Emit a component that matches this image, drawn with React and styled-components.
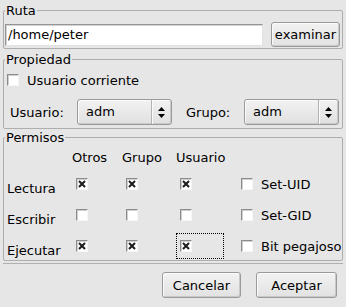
import styled, { createGlobalStyle } from "styled-components";

const GlobalStyle = createGlobalStyle`
  html, body {
    margin: 0;
    padding: 0;
    background: #e6e6e6;
  }
  body {
    font-family: "DejaVu Sans", Verdana, sans-serif;
    font-size: 13px;
    color: #000;
  }
`;

const Dialog = styled.div`
  width: 346px;
  height: 307px;
  box-sizing: border-box;
  padding: 3px 3px 0 3px;
  display: flex;
  flex-direction: column;
`;

const Group = styled.fieldset`
  margin: ${(p) => p.$mt || 0}px 0 0 0;
  padding: ${(p) => p.$pad};
  border: 1px solid #adadad;
  border-radius: 2px;
  min-width: 0;
`;

const Title = styled.legend`
  padding: 0 1px;
  margin-left: 0;
  line-height: 15px;
`;

const PathRow = styled.div`
  display: flex;
  align-items: center;
  gap: 8px;
  height: 25px;
`;

const TextInput = styled.input`
  flex: 1;
  min-width: 0;
  height: 22px;
  box-sizing: border-box;
  padding: 0 2px;
  font: inherit;
  color: #000;
  background: #fff;
  border: 1px solid;
  border-color: #959595 #e2e2e2 #e2e2e2 #959595;
  box-shadow: inset 1px 1px 0 #d4d4d4;
  outline: none;
`;

const PushButton = styled.button`
  width: ${(p) => p.$w}px;
  height: ${(p) => p.$h || 26}px;
  box-sizing: border-box;
  padding: 0;
  font: inherit;
  color: #000;
  border: 1px solid #9a9a9a;
  border-radius: 3px;
  background: linear-gradient(#f2f2f2, #e2e2e2);
  box-shadow: inset 1px 1px 0 #fbfbfb, inset -1px -1px 0 #c9c9c9;
`;

const CheckRow = styled.label`
  display: flex;
  align-items: center;
  gap: 8px;
  height: 16px;
  margin-left: 2px;
`;

const BoxEl = styled.span`
  width: 12px;
  height: 12px;
  box-sizing: border-box;
  flex: none;
  display: flex;
  align-items: center;
  justify-content: center;
  background: #fff;
  border: 1px solid;
  border-color: #8c8c8c #f6f6f6 #f6f6f6 #8c8c8c;
  box-shadow: inset 1px 1px 0 #cfcfcf;
`;

const CheckBox = ({ checked }) => (
  <BoxEl>
    {checked && (
      <svg width="8" height="8" viewBox="0 0 8 8">
        <path d="M1 1L7 7M7 1L1 7" stroke="#1a1a1a" strokeWidth="2" />
      </svg>
    )}
  </BoxEl>
);

const OwnerRow = styled.div`
  display: flex;
  align-items: center;
  height: 26px;
  margin-top: 11px;
  padding-left: 5px;
`;

const FieldLabel = styled.span`
  width: ${(p) => p.$w}px;
  margin-left: ${(p) => p.$ml || 0}px;
`;

const Combo = styled.div`
  width: 95px;
  height: 26px;
  box-sizing: border-box;
  display: flex;
  border: 1px solid #9a9a9a;
  border-radius: 3px;
  background: linear-gradient(#f2f2f2, #e0e0e0);
  box-shadow: inset 1px 1px 0 #fbfbfb, inset -1px -1px 0 #c9c9c9;
`;

const ComboText = styled.span`
  flex: 1;
  padding-left: 8px;
  line-height: 24px;
`;

const ComboArrow = styled.span`
  width: 19px;
  display: flex;
  align-items: center;
  justify-content: center;
  border-left: 1px solid #b3b3b3;
  box-shadow: inset 1px 0 0 #fafafa;
`;

const Select = ({ value }) => (
  <Combo>
    <ComboText>{value}</ComboText>
    <ComboArrow>
      <svg width="7" height="11" viewBox="0 0 7 11">
        <path d="M3.5 0L7 4H0Z M0 7H7L3.5 11Z" fill="#000" />
      </svg>
    </ComboArrow>
  </Combo>
);

const PermGrid = styled.div`
  display: grid;
  grid-template-columns: 67px 50px 54px 65px 1fr;
  grid-template-rows: 16px 26px 26px 26px;
  row-gap: 5px;
  align-items: center;
`;

const Header = styled.span`
  line-height: 16px;
`;

const RowLabel = styled.span`
  align-self: end;
  padding: 0 0 1px 2px;
  line-height: 15px;
`;

const CheckCell = styled.div`
  width: 48px;
  height: 26px;
  box-sizing: border-box;
  display: flex;
  align-items: center;
  padding-left: 3px;
  border: 1px dotted ${(p) => (p.$focus ? "#000" : "transparent")};
`;

const FlagCell = styled.div`
  display: flex;
  align-items: center;
  gap: 8px;
  white-space: nowrap;
`;

const Separator = styled.div`
  height: 1px;
  margin-top: 2px;
  background: #b0b0b0;
`;

const ButtonRow = styled.div`
  display: flex;
  justify-content: flex-end;
  gap: 15px;
  margin-top: 8px;
  padding-right: 6px;
`;

const rows = [
  { label: "Lectura", checks: [true, true, true], flag: "Set-UID" },
  { label: "Escribir", checks: [false, false, false], flag: "Set-GID" },
  { label: "Ejecutar", checks: [true, true, true], flag: "Bit pegajoso", focus: 2 },
];

export default function App() {
  return (
    <>
      <GlobalStyle />
      <Dialog>
        <Group $pad="4px 2px 1px 1px">
          <Title>Ruta</Title>
          <PathRow>
            <TextInput defaultValue="/home/peter" />
            <PushButton $w={69} $h={25}>examinar</PushButton>
          </PathRow>
        </Group>

        <Group $mt={3} $pad="5px 2px 3px 1px">
          <Title>Propiedad</Title>
          <CheckRow>
            <CheckBox />
            Usuario corriente
          </CheckRow>
          <OwnerRow>
            <FieldLabel $w={67}>Usuario:</FieldLabel>
            <Select value="adm" />
            <FieldLabel $w={58} $ml={14}>Grupo:</FieldLabel>
            <Select value="adm" />
          </OwnerRow>
        </Group>

        <Group $mt={1} $pad="5px 2px 1px 1px">
          <Title>Permisos</Title>
          <PermGrid>
            <span />
            <Header>Otros</Header>
            <Header>Grupo</Header>
            <Header>Usuario</Header>
            <span />
            {rows.map((r) => [
              <RowLabel key={r.label}>{r.label}</RowLabel>,
              ...r.checks.map((c, i) => (
                <CheckCell key={r.label + i} $focus={r.focus === i}>
                  <CheckBox checked={c} />
                </CheckCell>
              )),
              <FlagCell key={r.flag}>
                <CheckBox />
                {r.flag}
              </FlagCell>,
            ])}
          </PermGrid>
        </Group>
        <Separator />

        <ButtonRow>
          <PushButton $w={79}>Cancelar</PushButton>
          <PushButton $w={81}>Aceptar</PushButton>
        </ButtonRow>
      </Dialog>
    </>
  );
}
